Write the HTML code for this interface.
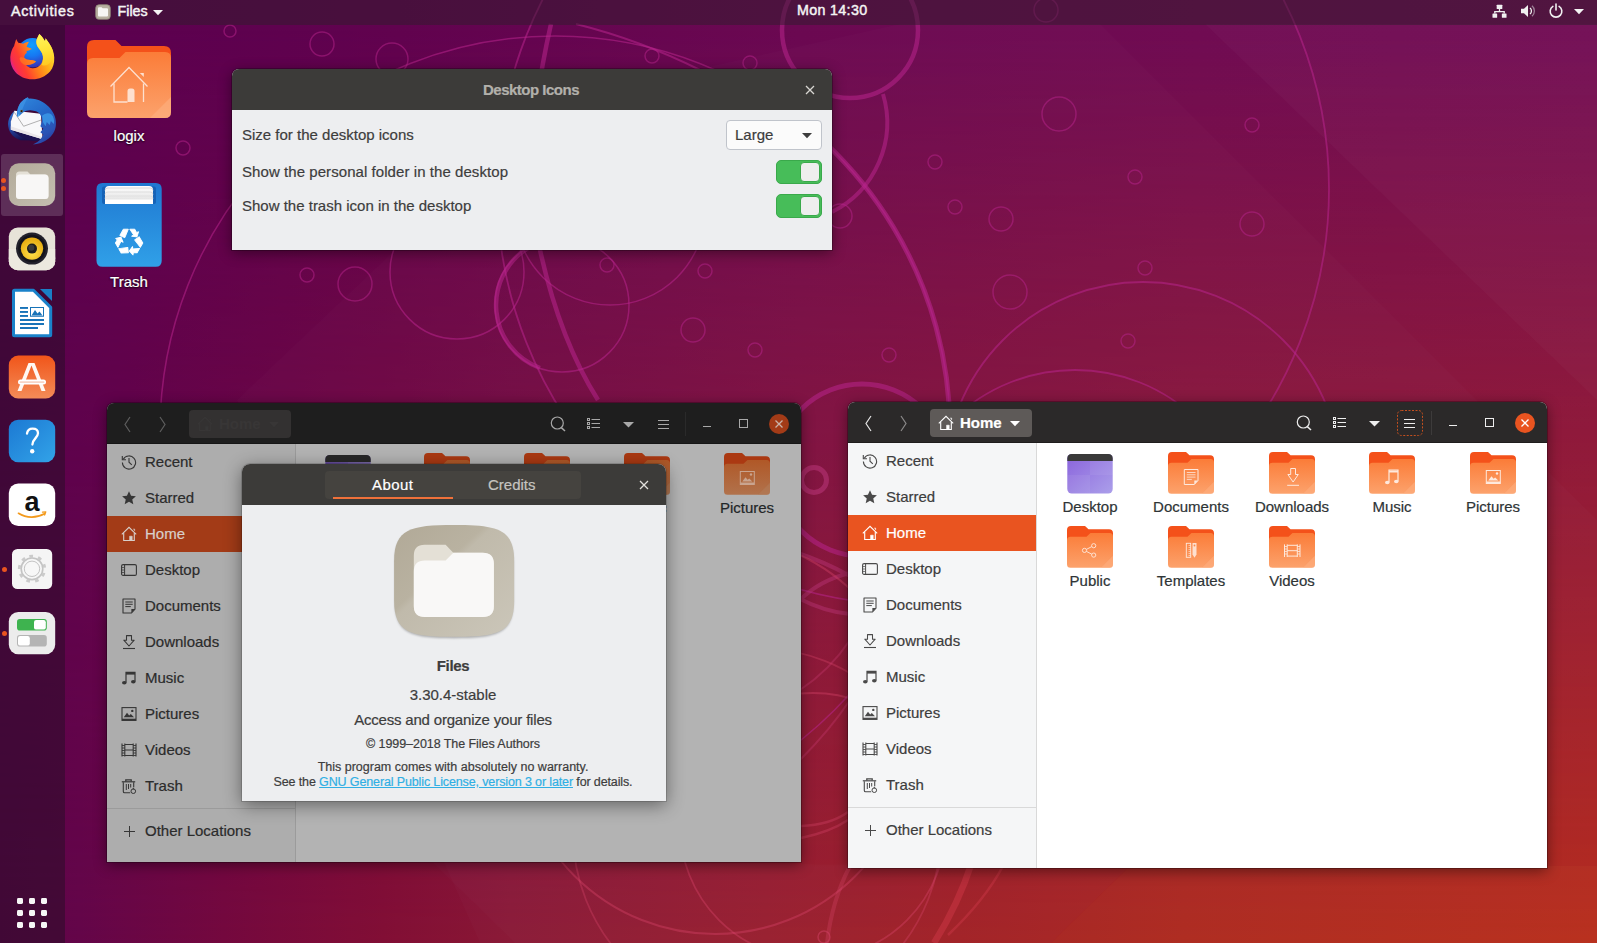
<!DOCTYPE html>
<html>
<head>
<meta charset="utf-8">
<title>Ubuntu Desktop</title>
<style>
*{box-sizing:border-box;margin:0;padding:0}
html,body{width:1597px;height:943px;overflow:hidden}
body{font-family:"Liberation Sans",sans-serif;font-size:15px;color:#3d3d3d;position:relative;background:#6a0a4a}
.abs{position:absolute}
#wall{position:absolute;left:0;top:0;width:1597px;height:943px}
/* top bar */
#topbar{position:absolute;left:0;top:0;width:1597px;height:25px;background:rgba(48,28,44,.5);color:#f4f4f4;font-weight:normal;font-size:14.300px;-webkit-text-stroke:.45px #f4f4f4}
#topbar span{position:absolute;top:-1px;line-height:23px;white-space:nowrap}
/* dock */
#dock{position:absolute;left:0;top:25px;width:65px;height:918px;background:rgba(36,14,36,.5)}
.dot{position:absolute;width:5px;height:5px;border-radius:50%;background:#e95420;left:1.5px}
/* windows */
.win{position:absolute;border-radius:7px 7px 0 0;box-shadow:0 3px 14px rgba(0,0,0,.45),0 0 0 1px rgba(0,0,0,.25)}
.hdr{position:absolute;left:0;top:0;width:100%;border-radius:7px 7px 0 0}
.t{position:absolute;white-space:nowrap;line-height:18px}
.side .t{left:0}
.row{position:absolute;left:0;width:188px;height:36px}
.row svg{position:absolute;left:12px;top:10px;width:17px;height:17px}
.row span{position:absolute;left:38px;top:0;line-height:35px;white-space:nowrap;font-size:15px}
.sl,.fl,.t{-webkit-text-stroke:.2px}
.ctr{left:0;width:422px;text-align:center}
.fl{position:absolute;width:100px;text-align:center;font-size:15px;line-height:18px;white-space:nowrap}
</style>
</head>
<body>
<svg id="wall" width="1597" height="943" viewBox="0 0 1597 943">
<defs>
<linearGradient id="wgt" x1="0" y1="0" x2="1" y2="0">
<stop offset="0" stop-color="#5a004f"/><stop offset=".25" stop-color="#61034f"/><stop offset=".5" stop-color="#6b0952"/><stop offset=".75" stop-color="#700c53"/><stop offset="1" stop-color="#720e55"/>
</linearGradient>
<linearGradient id="wgb" x1="0" y1="0" x2="1" y2="0">
<stop offset="0" stop-color="#5f0349"/><stop offset=".05" stop-color="#640549"/><stop offset=".14" stop-color="#74083e"/><stop offset=".24" stop-color="#820e35"/><stop offset=".32" stop-color="#8a1734"/><stop offset=".48" stop-color="#981c2c"/><stop offset=".6" stop-color="#a11e23"/><stop offset=".74" stop-color="#ab251e"/><stop offset="1" stop-color="#b5291b"/>
</linearGradient>
<linearGradient id="wgm" x1="0" y1="0" x2="0" y2="1"><stop offset="0" stop-color="#fff" stop-opacity="0"/><stop offset=".03" stop-color="#fff" stop-opacity="0"/><stop offset="1" stop-color="#fff" stop-opacity="1"/></linearGradient>
<mask id="wm"><rect width="1597" height="943" fill="url(#wgm)"/></mask>
</defs>
<rect width="1597" height="943" fill="url(#wgt)"/>
<rect width="1597" height="943" fill="url(#wgb)" mask="url(#wm)"/>
<!-- facets -->
<path d="M237 400L395 250L560 100L900 24H1100L1597 520V943H480z" fill="#fff" fill-opacity=".016"/>
<path d="M1205 24L1597 400V24z" fill="#fff" fill-opacity=".022"/>
<path d="M432 862L515 943H1051L1130 866z" fill="#fff" fill-opacity=".014"/>
<path d="M1130 866L1051 943H1597V866z" fill="#ff9a40" fill-opacity=".045"/>
<g fill="none" stroke="#b8248c" stroke-opacity=".55">
<!-- big circle thin left / thick right -->
<circle cx="555" cy="431" r="395" stroke-width="1.500"/>
<path d="M740 82A395 395 0 0 1 950 431" stroke-width="5" stroke-opacity=".6"/>
<!-- big thin circle -->
<circle cx="913" cy="189" r="416" stroke-width="1.800"/>
<!-- top circles -->
<circle cx="850" cy="30" r="68" stroke-width="4.500"/>
<path d="M883 94A100 100 0 0 1 832 212" stroke-width="4"/>
<circle cx="457" cy="272" r="67" stroke-width="1.500"/>
<circle cx="562" cy="305" r="67" stroke-width="1.500"/>
<path d="M528 248A67 67 0 0 0 540 368" stroke-width="4.500"/>
<circle cx="610" cy="210" r="95" stroke-width="1.500"/>
<path d="M551 24Q520 160 540 250T598 400" stroke-width="4.500"/>
<path d="M576 24Q640 40 700 70" stroke-width="2"/>
<!-- lower right -->
<circle cx="1143" cy="480" r="198" stroke-width="1.800"/>
<circle cx="1075" cy="545" r="175" stroke-width="1.800"/>
<circle cx="862" cy="470" r="86" stroke-width="5"/>
<circle cx="814" cy="480" r="12.500" stroke-width="5" stroke="#c03a80" stroke-opacity=".5"/>
<path d="M795 552Q825 562 850 576M850 573Q820 580 800 600M798 598Q825 612 850 614" stroke-width="4" stroke="#c03a80" stroke-opacity=".4"/>
<path d="M800 690Q830 670 850 640M800 760Q830 730 850 700" stroke-width="2" stroke="#d0407a" stroke-opacity=".3"/>
<!-- bottom -->
<circle cx="715" cy="735" r="199" stroke-width="2" stroke="#d8446a" stroke-opacity=".4"/>
<circle cx="757" cy="832" r="184" stroke-width="1.800" stroke="#d8446a" stroke-opacity=".35"/>
<circle cx="813" cy="826" r="133" stroke-width="1.800" stroke="#d8446a" stroke-opacity=".4"/>
<path d="M972 862Q958 905 934 943" stroke-width="6.500" stroke="#d23a4a" stroke-opacity=".45"/>
<path d="M1003 866Q985 900 948 935" stroke-width="2.500" stroke="#d23a4a" stroke-opacity=".4"/>
<path d="M801 826Q830 825 848 812M801 838Q830 832 848 820" stroke-width="2.500" stroke="#d8446a" stroke-opacity=".35"/>
<path d="M827 943Q832 900 850 866" stroke-width="4" stroke="#d8446a" stroke-opacity=".3"/>
<circle cx="824" cy="937" r="6" stroke-width="1.500" stroke="#d8446a" stroke-opacity=".45"/>
</g>
<g fill="none" stroke="#b8248c" stroke-opacity=".5" stroke-width="1.500">
<circle cx="230" cy="31" r="6"/><circle cx="183" cy="148" r="7"/><circle cx="322" cy="44" r="12"/><circle cx="392" cy="59" r="16"/>
<circle cx="652" cy="56" r="7"/><circle cx="750" cy="63" r="7"/><circle cx="1059" cy="114" r="17"/><circle cx="935" cy="162" r="7"/>
<circle cx="955" cy="207" r="7"/><circle cx="1001" cy="219" r="12"/><circle cx="1010" cy="292" r="17"/><circle cx="693" cy="330" r="12"/>
<circle cx="755" cy="350" r="7"/><circle cx="889" cy="355" r="7"/><circle cx="607" cy="265" r="7"/><circle cx="705" cy="271" r="7"/>
<circle cx="840" cy="216" r="12"/><circle cx="307" cy="275" r="7"/><circle cx="355" cy="284" r="17"/><circle cx="1145" cy="268" r="7"/>
<circle cx="1128" cy="341" r="7"/><circle cx="1252" cy="125" r="7"/><circle cx="1252" cy="224" r="12"/><circle cx="1135" cy="177" r="7"/>
<circle cx="1046" cy="10" r="12"/><circle cx="437" cy="175" r="7"/>
</g>
</svg>

<div id="topbar">
<span id="tb-act" style="left:11px;top:0;letter-spacing:.71px">Activities</span>
<svg class="abs" style="left:95px;top:3.500px" width="16" height="16" viewBox="0 0 16 16"><rect x=".7" y=".7" width="14.6" height="14.6" rx="3.4" fill="#b8b0a0" stroke="#8f8778" stroke-width=".8"/><path d="M3 4.2q0-1 1-1h2.6l1 1H12q1 0 1 1V11.6q0 1-1 1H4q-1 0-1-1z" fill="#f7f6f4"/></svg>
<span id="tb-files" style="left:117.500px;top:0;letter-spacing:0">Files</span>
<svg class="abs" style="left:153px;top:9.500px" width="10" height="6" viewBox="0 0 10 6"><path d="M0 0h10L5 5.2z" fill="#f4f4f4"/></svg>
<span id="tb-clock" style="left:797px;letter-spacing:.32px">Mon 14:30</span>
<!-- network -->
<svg class="abs" style="left:1492px;top:3.500px" width="15" height="14.500" viewBox="0 0 16 17" preserveAspectRatio="none"><g fill="#f0f0f0"><rect x="5" y="1" width="6" height="5" rx=".6"/><rect x="0.5" y="11" width="5" height="5" rx=".6"/><rect x="10.5" y="11" width="5" height="5" rx=".6"/><path d="M7.3 6h1.4v2.3h5v2.7h-1.4V9.700h-8.600V11H2.300V8.300h5z"/></g></svg>
<!-- volume -->
<svg class="abs" style="left:1520px;top:3px" width="17" height="16" viewBox="0 0 17 17" preserveAspectRatio="none"><path d="M1 6h3l4-4v13l-4-4H1z" fill="#f0f0f0"/><path d="M10 5.200a4.500 4.500 0 0 1 0 6.600" stroke="#f0f0f0" stroke-width="1.300" fill="none"/><path d="M12 3a7.500 7.500 0 0 1 0 11" stroke="#cfc6cf" stroke-opacity=".6" stroke-width="1.300" fill="none"/></svg>
<!-- power -->
<svg class="abs" style="left:1547.500px;top:2.500px" width="16" height="16" viewBox="0 0 17 17"><path d="M5.200 3.600a6.200 6.200 0 1 0 6.600 0" stroke="#f0f0f0" stroke-width="1.700" fill="none" stroke-linecap="round"/><path d="M8.500 1v6.500" stroke="#f0f0f0" stroke-width="1.700" stroke-linecap="round"/></svg>
<svg class="abs" style="left:1574px;top:9px" width="10" height="6" viewBox="0 0 10 6"><path d="M0 0h10L5 5.2z" fill="#f4f4f4"/></svg>
</div>

<div id="dock">
<div class="abs" style="left:1px;top:129px;width:62px;height:62px;border-radius:3px;background:rgba(255,255,255,.16)"></div>
</div>
<div class="dot" style="top:178px;left:1.200px"></div><div class="dot" style="top:186px;left:1.200px"></div>
<div class="dot" style="top:566.500px"></div><div class="dot" style="top:630.500px"></div>
<svg class="abs" style="left:0;top:24px" width="65" height="919" viewBox="0 24 65 919">
<defs>
<linearGradient id="ffx" x1=".8" y1=".1" x2=".25" y2=".95"><stop offset="0" stop-color="#ffe226"/><stop offset=".35" stop-color="#ffa31a"/><stop offset=".7" stop-color="#ff4a2a"/><stop offset="1" stop-color="#e2219a"/></linearGradient>
<radialGradient id="ffg" cx=".5" cy=".35" r=".6"><stop offset="0" stop-color="#1e8af5"/><stop offset=".7" stop-color="#1b4fd6"/><stop offset="1" stop-color="#3b1fa8"/></radialGradient>
<linearGradient id="tbg" x1="0" y1="0" x2="1" y2="1"><stop offset="0" stop-color="#2a8fe0"/><stop offset=".6" stop-color="#1c63c4"/><stop offset="1" stop-color="#12408f"/></linearGradient>
<linearGradient id="fsq" x1="0" y1="0" x2="1" y2="1"><stop offset="0" stop-color="#b3ab9a"/><stop offset="1" stop-color="#c4beb0"/></linearGradient>
<linearGradient id="swg" x1="0" y1="0" x2="0" y2="1"><stop offset="0" stop-color="#f1551a"/><stop offset="1" stop-color="#f38c58"/></linearGradient>
<linearGradient id="hpg" x1="0" y1="0" x2="1" y2="1"><stop offset="0" stop-color="#1c79d3"/><stop offset="1" stop-color="#32a3e8"/></linearGradient>
<radialGradient id="rby" cx=".5" cy=".7" r=".6"><stop offset="0" stop-color="#ffe04a"/><stop offset="1" stop-color="#e8b014"/></radialGradient>
</defs>
<!-- firefox -->
<g transform="translate(4 29) scale(.05938)">
<defs>
<radialGradient id="ffg2" gradientUnits="userSpaceOnUse" cx="470" cy="270" r="420"><stop offset="0" stop-color="#12a0ff"/><stop offset=".45" stop-color="#1677f2"/><stop offset=".8" stop-color="#3340c0"/><stop offset="1" stop-color="#3a2398"/></radialGradient>
<linearGradient id="ffx2" gradientUnits="userSpaceOnUse" x1="110" y1="640" x2="840" y2="300"><stop offset="0" stop-color="#d41fae"/><stop offset=".1" stop-color="#f72c50"/><stop offset=".25" stop-color="#ff3d30"/><stop offset=".48" stop-color="#ff7a1c"/><stop offset=".7" stop-color="#ffae18"/><stop offset=".9" stop-color="#ffd62c"/><stop offset="1" stop-color="#ffe83a"/></linearGradient>
<linearGradient id="ffy2" gradientUnits="userSpaceOnUse" x1="600" y1="90" x2="740" y2="640"><stop offset="0" stop-color="#fff45a"/><stop offset=".5" stop-color="#ffe53a"/><stop offset="1" stop-color="#ffc51e"/></linearGradient>
</defs>
<circle cx="480" cy="400" r="250" fill="url(#ffg2)"/>
<path d="M205 170C190 215 180 250 170 285C135 330 112 400 106 470C100 560 130 650 190 725C260 805 370 850 480 848C590 846 700 800 775 715C830 650 850 570 846 480C842 400 815 320 765 250C745 222 722 185 700 155C700 175 698 190 690 205C665 160 630 115 595 85C575 120 560 150 548 185C540 225 548 260 565 295C590 335 625 370 645 415C665 470 660 530 625 590C590 640 535 662 480 660C440 657 400 640 372 605C430 612 500 590 540 548C505 530 470 522 440 522C400 520 365 512 345 490C335 470 345 430 385 402C383 390 381 380 380 370C410 360 445 350 470 335C440 325 405 312 380 300C390 270 405 240 420 215C385 220 350 232 325 248C295 238 270 236 250 238C230 220 215 195 205 170z" fill="url(#ffx2)"/>
<path d="M595 85C575 120 560 150 548 185C540 225 548 260 565 295C590 335 625 370 645 415C665 470 662 540 630 600C690 640 760 600 800 540C850 470 835 360 765 250C745 222 722 185 700 155C700 175 698 190 690 205C665 160 630 115 595 85z" fill="url(#ffy2)"/>
<path d="M345 490C300 470 270 470 262 500C275 560 320 600 372 605C430 612 500 590 540 548C505 530 470 522 440 522C400 520 365 512 345 490z" fill="#ff8a1c" fill-opacity=".55"/>
</g>
<!-- thunderbird -->
<g transform="translate(4 93) scale(.05938)">
<defs>
<linearGradient id="tb1" gradientUnits="userSpaceOnUse" x1="250" y1="100" x2="800" y2="850"><stop offset="0" stop-color="#2f86dc"/><stop offset=".45" stop-color="#2467c8"/><stop offset=".8" stop-color="#2b52b4"/><stop offset="1" stop-color="#23399a"/></linearGradient>
<linearGradient id="tb2" gradientUnits="userSpaceOnUse" x1="100" y1="300" x2="250" y2="800"><stop offset="0" stop-color="#2f7ad6"/><stop offset=".6" stop-color="#23409c"/><stop offset="1" stop-color="#171250"/></linearGradient>
</defs>
<path d="M240 250C120 330 55 450 72 565C90 690 180 765 275 795L560 800L650 780L115 480L175 300z" fill="url(#tb2)"/>
<path d="M115 610L650 775L560 805C440 800 320 770 250 710z" fill="#1b1352"/>
<path d="M175 300L620 350L650 780L115 620V480z" fill="#f8f8fa"/>
<path d="M175 325L330 560L625 455" fill="none" stroke="#6f6f6f" stroke-width="9"/>
<path d="M115 560L115 620L650 780L648 740z" fill="#e9e6ea"/>
<path d="M225 405C205 340 225 240 275 170C310 120 360 85 402 70C408 82 415 90 425 95C480 92 570 110 650 150C740 200 820 290 855 390C885 480 880 580 845 650C800 740 720 810 620 842C570 858 530 864 488 866C540 840 580 815 605 790C630 760 650 730 662 700L612 662L662 602L612 562L642 470C640 420 625 380 600 350C570 315 520 298 445 292C400 290 360 305 335 322C310 340 285 360 270 375z" fill="url(#tb1)"/>
<path d="M640 385C690 340 750 330 800 360C840 400 850 470 840 520L790 470L770 540L720 490L700 560L660 500z" fill="#3c9be8" fill-opacity=".8"/>
<path d="M275 170C310 120 360 85 402 70C380 110 350 170 320 250C300 300 270 350 235 395C215 340 230 240 275 170z" fill="#3f94e6" fill-opacity=".75"/>
<circle cx="296" cy="305" r="24" fill="#8a7a55"/><circle cx="296" cy="305" r="16" fill="#1a1208"/>
<path d="M225 405L240 355L275 375z" fill="#5fb4ee"/>
</g>
<!-- files -->
<g>
<rect x="8.800" y="163.300" width="46.400" height="42.700" rx="10" fill="url(#fsq)"/>
<path d="M16 175q0-3.500 3.500-3.500h8l3 3H45q3.500 0 3.500 3.500V196q0 3-3 3H19q-3 0-3-3z" fill="#e4e0d6"/>
<path d="M16 179q0-4.500 4-4.500H44.500q4 0 4 4V195.500q0 3.500-3.500 3.500H19.500q-3.500 0-3.500-3.500z" fill="#f8f7f6"/>
</g>
<!-- rhythmbox -->
<g>
<rect x="8.800" y="227.600" width="46.400" height="42.600" rx="9" fill="#e7e3d8"/>
<rect x="8.800" y="249" width="46.400" height="21.200" rx="9" fill="#ece9df"/>
<rect x="8.800" y="249" width="46.400" height="10" fill="#ece9df"/>
<circle cx="32" cy="248.600" r="16" fill="#23222c"/>
<circle cx="32" cy="248.600" r="13.800" fill="#14141c"/>
<circle cx="32" cy="248.600" r="11.200" fill="url(#rby)"/>
<circle cx="32" cy="248.600" r="5" fill="#1e1e1e"/>
<circle cx="31.300" cy="247.800" r="3" fill="#3a3a3a"/>
</g>
<!-- writer -->
<g>
<path d="M14.500 290.200h19l17.200 17.200v27.300q0 1-1 1H14.500q-1 0-1-1v-43.500q0-1 1-1z" fill="#fff" stroke="#1a82ca" stroke-width="3" stroke-linejoin="round"/>
<path d="M40 289h12v12z" fill="#1a7fc6"/>
<g fill="#1873b8"><rect x="20" y="307" width="8" height="1.900"/><rect x="20" y="311" width="8" height="1.900"/><rect x="20" y="315" width="8" height="1.900"/><rect x="20" y="319" width="24" height="2"/><rect x="20" y="323" width="24" height="2"/><rect x="20" y="327" width="18" height="2"/>
<path d="M30 307h14v9.800H30z M31 308v7.800h12V308z"/><path d="M31.500 315.500l3.500-5.500l2.500 3.500l2-2l3 4z"/></g>
</g>
<!-- software -->
<g>
<rect x="8.800" y="355.600" width="46.400" height="43" rx="9.500" fill="url(#swg)"/>
<path d="M28.500 363h6l11 28h-4l-10-25.500l-10 25.500h-4z" fill="#fff7f2"/>
<rect x="18" y="379.600" width="28" height="5" rx="2.500" fill="#fff" />
<rect x="19.500" y="381.200" width="25" height="1.800" rx=".9" fill="#f7d3c4"/>
</g>
<!-- help -->
<g>
<rect x="8.800" y="419.800" width="46.400" height="42.400" rx="9.500" fill="url(#hpg)"/>
<path d="M27 433.500c.5-3.200 2.600-4.800 5.600-4.800c3.400 0 5.400 2 5.400 4.600c0 2.400-1.300 3.800-3 5.600c-1.600 1.700-2.600 3-2.600 5.600" fill="none" stroke="#fff" stroke-width="2.300" stroke-linecap="round"/>
<circle cx="32.200" cy="451.300" r="2.200" fill="#fff"/>
</g>
<!-- amazon -->
<g>
<rect x="8.800" y="483.500" width="46.400" height="42.600" rx="9.500" fill="#fff"/>
<text x="32" y="510.500" font-family="Liberation Sans, sans-serif" font-weight="bold" font-size="27" text-anchor="middle" fill="#111">a</text>
<path d="M18.500 513.300c8 5 18 5 26 .5" fill="none" stroke="#f39a1c" stroke-width="1.700" stroke-linecap="round"/>
<path d="M42.500 512.100l3.300-.3l-1.200 3.200" fill="none" stroke="#f39a1c" stroke-width="1.300" stroke-linecap="round" stroke-linejoin="round"/>
</g>
<!-- settings -->
<g>
<rect x="12" y="549" width="40.200" height="40" rx="5.500" fill="#f5f5f5"/>
<circle cx="32" cy="568.800" r="12.700" fill="none" stroke="#cbcbcb" stroke-width="2.800" stroke-dasharray="3.700 5.166" transform="rotate(-102 32 568.800)"/>
<circle cx="32" cy="568.800" r="10.800" fill="#f7f7f7" stroke="#c4c4c4" stroke-width="1.600"/>
<circle cx="32" cy="568.800" r="7.700" fill="none" stroke="#bcbcbc" stroke-width=".9"/>
</g>
<!-- tweaks / extensions -->
<g>
<rect x="8.800" y="612" width="46.400" height="42.200" rx="9.500" fill="#ececec"/>
<rect x="17" y="619" width="29.800" height="11.600" rx="2.800" fill="#3eb34f"/>
<rect x="34" y="620" width="11.800" height="9.600" rx="2.200" fill="#fff"/>
<rect x="17" y="635" width="29.800" height="11.600" rx="2.800" fill="#b4b4b4"/>
<rect x="18" y="636" width="11.800" height="9.600" rx="2.200" fill="#fff"/>
</g>
<!-- show apps -->
<g fill="#f6f6f6">
<rect x="17" y="898" width="6" height="6" rx="1.400"/><rect x="29" y="898" width="6" height="6" rx="1.400"/><rect x="41" y="898" width="6" height="6" rx="1.400"/>
<rect x="17" y="910" width="6" height="6" rx="1.400"/><rect x="29" y="910" width="6" height="6" rx="1.400"/><rect x="41" y="910" width="6" height="6" rx="1.400"/>
<rect x="17" y="922" width="6" height="6" rx="1.400"/><rect x="29" y="922" width="6" height="6" rx="1.400"/><rect x="41" y="922" width="6" height="6" rx="1.400"/>
</g>
</svg>

<svg class="abs" style="left:80px;top:36px" width="100" height="240" viewBox="80 36 100 240">
<defs>
<linearGradient id="fo1" x1="0" y1="0" x2="0" y2="1"><stop offset="0" stop-color="#fb7c38"/><stop offset="1" stop-color="#fca26c"/></linearGradient>
<linearGradient id="tr1" x1="0" y1="0" x2="0" y2="1"><stop offset="0" stop-color="#1f78d1"/><stop offset="1" stop-color="#30a0e8"/></linearGradient>
<linearGradient id="pap" x1="0" y1="0" x2="0" y2="1"><stop offset="0" stop-color="#ffffff"/><stop offset="1" stop-color="#dcdcdc"/></linearGradient>
</defs>
<!-- home folder -->
<path d="M87 47q0-7 7-7h21.500l6 6H164q7 0 7 7v20H87z" fill="#f4511a"/>
<path d="M87 64q0-6 6-6h26.500l6-6H165q6 0 6 6v54q0 6-6 6H93q-6 0-6-6z" fill="url(#fo1)"/>
<path d="M150 118l21-21v15q0 6-6 6z" fill="#fdb283" fill-opacity=".55"/>
<g fill="none" stroke="#fde0cf" stroke-width="1.300" stroke-linejoin="miter"><path d="M110.500 86.500l18.500-19l18.500 19"/><path d="M114 83.500v18.500h13.500"/><path d="M143.500 83.500v18.500"/></g><path d="M139.800 73h4v4z" fill="#fde0cf"/>
<path d="M127.500 102v-11q0-2.500 2.500-2.500h2q2.500 0 2.500 2.500v11z" fill="#fde0cf"/>
<!-- trash -->
<path d="M96.500 189q0-6 6-6h53.200q6 0 6 6v71.700q0 6-6 6h-53.200q-6 0-6-6z" fill="url(#tr1)"/>
<rect x="102" y="186.500" width="54" height="17.500" rx="2" fill="#1663b6"/>
<path d="M105 190q0-4 4-4h40q4 0 4 4v14h-48z" fill="url(#pap)"/>
<path d="M105 190.500q0-2.500 3-2.500h42q3 0 3 2.500" fill="none" stroke="#d2d2d2" stroke-width=".8"/>
<path d="M105 194.500q0-2.500 3-2.500h42q3 0 3 2.500" fill="none" stroke="#d8d8d8" stroke-width=".8"/>
<path d="M105 198.500q0-2.500 3-2.500h42q3 0 3 2.500" fill="none" stroke="#dedede" stroke-width=".8"/>
<rect x="105" y="199.500" width="48" height="4.500" fill="#fff"/>
<g fill="#fff" transform="translate(129.100 241.700)">
<g id="rc" stroke="#fff" stroke-width=".9" stroke-linejoin="round"><path d="M-9.300-6.200L-5.800-12.500H-.8L-4.300-4z"/><path d="M.7-12.500H5.700L7.500-9.200L9.500-10L7.900-4.800L2.500-5.500L4.500-6.800z"/></g>
<use href="#rc" transform="rotate(120)"/><use href="#rc" transform="rotate(240)"/>
</g>
</svg>
<div class="fl" id="dl1" style="left:79px;top:127px;color:#fff;text-shadow:0 1px 2px rgba(0,0,0,.8),0 0 2px rgba(0,0,0,.5)">logix</div>
<div class="fl" id="dl2" style="left:79px;top:273px;color:#fff;text-shadow:0 1px 2px rgba(0,0,0,.8),0 0 2px rgba(0,0,0,.5)">Trash</div>

<div class="win" id="w1" style="left:232px;top:69px;width:600px;height:181px;background:#edeef0">
<div class="hdr" style="height:41px;background:#3c3b39"></div>
<div class="t" id="w1-title" style="left:251px;top:12px;font-weight:bold;color:#b2b0ab;font-size:15px;letter-spacing:-.5px">Desktop Icons</div>
<svg class="abs" style="left:573px;top:16px" width="10" height="10" viewBox="0 0 10 10"><path d="M1 1l8 8M9 1l-8 8" stroke="#d8d6d2" stroke-width="1.300"/></svg>
<div class="t" id="w1-r1" style="left:10px;top:57px">Size for the desktop icons</div>
<div class="t" id="w1-r2" style="left:10px;top:94px;letter-spacing:.065px">Show the personal folder in the desktop</div>
<div class="t" id="w1-r3" style="left:10px;top:128px">Show the trash icon in the desktop</div>
<div class="abs" style="left:494px;top:51px;width:96px;height:30px;background:#fbfbfb;border:1px solid #c0c4cb;border-radius:4px"></div>
<div class="t" id="w1-large" style="left:503px;top:57px">Large</div>
<svg class="abs" style="left:569.500px;top:63.5px" width="10" height="6" viewBox="0 0 10 6"><path d="M0 0h10L5 5.300z" fill="#3d3d3d"/></svg>
<div class="abs" style="left:544px;top:91px;width:46px;height:24px;background:#47bd59;border-radius:5px;border:1px solid #3aa94b"></div>
<div class="abs" style="left:568px;top:93px;width:20px;height:20px;background:#eeeeee;border-radius:4px;border:1px solid #3aa94b"></div>
<div class="abs" style="left:544px;top:125px;width:46px;height:24px;background:#47bd59;border-radius:5px;border:1px solid #3aa94b"></div>
<div class="abs" style="left:568px;top:127px;width:20px;height:20px;background:#eeeeee;border-radius:4px;border:1px solid #3aa94b"></div>
</div>

<svg width="0" height="0" style="position:absolute"><defs>
<linearGradient id="fg1" x1="0" y1="0" x2="0" y2="1"><stop offset="0" stop-color="#fb7c38"/><stop offset="1" stop-color="#fca26c"/></linearGradient>
<linearGradient id="fg2" x1="0" y1="0" x2="0" y2="1"><stop offset="0" stop-color="#b05827"/><stop offset="1" stop-color="#b1724c"/></linearGradient>
<linearGradient id="dg1" x1="0" y1="0" x2="1" y2="1"><stop offset="0" stop-color="#8a63dc"/><stop offset="1" stop-color="#ab9fea"/></linearGradient>
<linearGradient id="dg2" x1="0" y1="0" x2="1" y2="1"><stop offset="0" stop-color="#61469a"/><stop offset="1" stop-color="#786fa4"/></linearGradient>
</defs></svg>
<svg width="0" height="0" style="position:absolute">
<defs>
<symbol id="i-recent" viewBox="0 0 16 16"><path d="M2.300 5.200A6.600 6.600 0 1 1 1.400 8.500" fill="none" stroke="currentColor" stroke-width="1.100"/><path d="M1.300 2v3.700h3.700" fill="none" stroke="currentColor" stroke-width="1.100"/><path d="M8 4v4.200l2.800 2.600" fill="none" stroke="currentColor" stroke-width="1.100"/></symbol>
<symbol id="i-star" viewBox="0 0 16 16"><path d="M8 1.300l2.050 4.500l4.850.5l-3.650 3.250l1.050 4.800L8 11.850l-4.300 2.500l1.050-4.800L1.100 6.300l4.850-.5z" fill="currentColor"/></symbol>
<symbol id="i-home" viewBox="0 0 16 16"><path d="M.8 8.300L8 1.300l7.200 7" fill="none" stroke="currentColor" stroke-width="1.100"/><path d="M2.700 7v7.500h10.600V7" fill="none" stroke="currentColor" stroke-width="1.100"/><path d="M8.600 14.500v-4.300h2.600v4.300" fill="currentColor" stroke="currentColor" stroke-width=".6"/><path d="M12.300 3.200h1.300v1.600" fill="none" stroke="currentColor" stroke-width=".9"/></symbol>
<symbol id="i-desktop" viewBox="0 0 16 16"><rect x=".6" y="2.600" width="14.800" height="10.800" rx="1.500" fill="none" stroke="currentColor" stroke-width="1.100"/><path d="M3.600 2.600v10.800" stroke="currentColor" stroke-width="1"/><path d="M1.300 5.500h1.400M1.300 8h1.400M1.300 10.500h1.400" stroke="currentColor" stroke-width="1"/></symbol>
<symbol id="i-docs" viewBox="0 0 16 16"><path d="M2 1h12v10.200L10.500 15H2z" fill="none" stroke="currentColor" stroke-width="1.100" stroke-linejoin="round"/><path d="M14 11h-3.600v4z" fill="currentColor"/><path d="M4.300 4h7.400M4.300 6.300h7.400M4.300 8.600h5.500" stroke="currentColor" stroke-width="1"/></symbol>
<symbol id="i-down" viewBox="0 0 16 16"><path d="M5.500 1.600h5v4.600h2.700L8 12L2.800 6.200h2.700z" fill="none" stroke="currentColor" stroke-width="1.050" stroke-linejoin="round"/><path d="M2 14.500h12" stroke="currentColor" stroke-width="1.100"/></symbol>
<symbol id="i-music" viewBox="0 0 16 16"><path d="M5 12.500V2.300h9V11.500" fill="none" stroke="currentColor" stroke-width="1.200"/><path d="M5 3.700h9" stroke="currentColor" stroke-width="1.800"/><ellipse cx="3.300" cy="12.700" rx="2.300" ry="1.800" fill="currentColor"/><ellipse cx="12.300" cy="11.700" rx="2.300" ry="1.800" fill="currentColor"/></symbol>
<symbol id="i-pics" viewBox="0 0 16 16"><rect x="1" y="1.600" width="14" height="12.800" fill="none" stroke="currentColor" stroke-width="1.100"/><path d="M1 12.700h14v1.700H1z" fill="currentColor"/><path d="M2.800 11.200l3.200-4.400l2.200 2.600l1.600-1.300l3.200 3.100z" fill="currentColor"/><circle cx="11.300" cy="4.900" r="1.200" fill="currentColor"/></symbol>
<symbol id="i-video" viewBox="0 0 16 16"><path d="M1 1.500v13M15 1.500v13M3.800 1.500v13M12.200 1.500v13M3.800 2.500h8.400M3.800 8h8.400M3.800 13.500h8.400" fill="none" stroke="currentColor" stroke-width="1.100"/><path d="M1 3.500h2.800M1 6h2.800M1 8.500h2.800M1 11h2.800M1 13.500h2.800M12.200 3.500H15M12.200 6H15M12.200 8.500H15M12.200 11H15M12.200 13.500H15" stroke="currentColor" stroke-width=".9"/></symbol>
<symbol id="i-trash" viewBox="0 0 16 16"><path d="M2.300 4.300V13.500q0 1.300 1.300 1.300h5.600M12.700 4.300v5" fill="none" stroke="currentColor" stroke-width="1.100"/><path d="M.8 3.800h13.400" stroke="currentColor" stroke-width="1.200"/><path d="M4.800 3.500V1.800h5.400v1.700" fill="none" stroke="currentColor" stroke-width="1.300"/><path d="M5.300 6v6M7.500 6v5M9.700 6v3.500" stroke="currentColor" stroke-width="1"/><circle cx="12.300" cy="13.200" r="2.300" fill="none" stroke="currentColor" stroke-width="1"/><path d="M12.300 9.800v1.800" stroke="currentColor" stroke-width="1"/></symbol>
<symbol id="i-plus" viewBox="0 0 16 16"><path d="M8.500 3v11M3 8.500h11" stroke="currentColor" stroke-width="1"/></symbol>
<symbol id="foldA" viewBox="0 0 46 42"><path d="M0 4Q0 0 4 0h14l3.500 3.300H42q4 0 4 4V22H0z" fill="#f4511a"/><path d="M0 14.300q0-3.500 3.500-3.500h16l4-3.700h19q3.500 0 3.500 3.500V38.300q0 3.500-3.500 3.500h-39q-3.500 0-3.500-3.500z" fill="url(#fg1)"/><path d="M34 41.800L46 29.800V38.300q0 3.500-3.500 3.500z" fill="#fdb283" fill-opacity=".5"/></symbol><symbol id="foldB" viewBox="0 0 46 42"><path d="M0 4Q0 0 4 0h14l3.500 3.300H42q4 0 4 4V22H0z" fill="#ab3912"/><path d="M0 14.300q0-3.500 3.500-3.500h16l4-3.700h19q3.500 0 3.500 3.500V38.300q0 3.500-3.500 3.500h-39q-3.500 0-3.500-3.500z" fill="url(#fg2)"/><path d="M34 41.800L46 29.800V38.300q0 3.500-3.500 3.500z" fill="#b27d5b" fill-opacity=".5"/></symbol>
</defs>
</svg>
<div class="win" id="w2" style="left:107px;top:403px;width:694px;height:459px;background:#b3b3b3">
<div class="hdr" style="height:41px;background:#1e1e1e;border-bottom:1px solid #161616"></div>
<svg class="abs" style="left:17px;top:12.5px" width="7" height="17" viewBox="0 0 7 17"><path d="M6 1L1 8.500L6 16" fill="none" stroke="#5e5e5e" stroke-width="1.200"/></svg>
<svg class="abs" style="left:52px;top:12.5px" width="7" height="17" viewBox="0 0 7 17"><path d="M1 1L6 8.500L1 16" fill="none" stroke="#5e5e5e" stroke-width="1.200"/></svg>
<div class="abs" style="left:82px;top:7px;width:102px;height:28px;border-radius:4px;background:#333131"></div>
<svg class="abs" style="left:90px;top:13px;color:#383636" width="16" height="16"><use href="#i-home"/></svg>
<div class="t" id="w2-path" style="left:112px;top:12px;font-weight:bold;color:#383636;font-size:15px">Home</div>
<svg class="abs" style="left:162px;top:19px" width="10" height="6" viewBox="0 0 10 6"><path d="M0 0h10L5 5.300z" fill="#383636"/></svg>
<svg class="abs" style="left:442px;top:12px" width="18" height="18" viewBox="0 0 18 18"><circle cx="8.300" cy="8" r="6" fill="none" stroke="#a8a8a8" stroke-width="1.200"/><path d="M12.300 12.600L16 16" stroke="#a8a8a8" stroke-width="1.500"/></svg>
<svg class="abs" style="left:480px;top:15px" width="13" height="11" viewBox="0 0 13 11"><g fill="none" stroke="#a8a8a8"><rect x=".5" y=".5" width="2" height="2" stroke-width="1"/><rect x=".5" y="4.500" width="2" height="2" stroke-width="1"/><rect x=".5" y="8.500" width="2" height="2" stroke-width="1"/><path d="M4.500 1.500H13M4.500 5.500H13M4.500 9.500H13" stroke-width="1.200"/></g></svg>
<svg class="abs" style="left:516px;top:19px" width="11" height="6" viewBox="0 0 11 6"><path d="M0 0h11L5.500 5.500z" fill="#a8a8a8"/></svg>
<svg class="abs" style="left:551px;top:16px" width="11" height="11" viewBox="0 0 11 11"><path d="M0 1.500H11M0 5.500H11M0 9.500H11" stroke="#a8a8a8" stroke-width="1.200"/></svg>
<div class="abs" style="left:578px;top:9px;width:1px;height:24px;background:#2a2a2a"></div>
<div class="abs" style="left:596px;top:23px;width:8px;height:1.300px;background:#a8a8a8"></div>
<div class="abs" style="left:632px;top:16px;width:9px;height:9px;border:1.300px solid #a8a8a8"></div>
<div class="abs" style="left:662px;top:11px;width:20px;height:20px;border-radius:50%;background:#a33b17"></div>
<svg class="abs" style="left:668px;top:17px" width="8" height="8" viewBox="0 0 8 8"><path d="M.5.5l7 7M7.500.5l-7 7" stroke="#c9b3aa" stroke-width="1.300"/></svg>
<div class="abs side" style="left:0;top:41px;width:189px;height:418px;background:#adadad;border-right:1px solid #9b9b9b"></div>
<div class="row" style="top:41px;"><svg style="color:#363636;left:14px;top:10px;width:16px;height:16px"><use href="#i-recent"/></svg><span class="sl" style="color:#2b2b2b">Recent</span></div>
<div class="row" style="top:77px;"><svg style="color:#363636;left:14px;top:10px;width:16px;height:16px"><use href="#i-star"/></svg><span class="sl" style="color:#2b2b2b">Starred</span></div>
<div class="row" style="top:113px;background:#a33b17;"><svg style="color:#d8cfca;left:14px;top:10px;width:16px;height:16px"><use href="#i-home"/></svg><span class="sl" style="color:#d8cfca">Home</span></div>
<div class="row" style="top:149px;"><svg style="color:#363636;left:14px;top:10px;width:16px;height:16px"><use href="#i-desktop"/></svg><span class="sl" style="color:#2b2b2b">Desktop</span></div>
<div class="row" style="top:185px;"><svg style="color:#363636;left:14px;top:10px;width:16px;height:16px"><use href="#i-docs"/></svg><span class="sl" style="color:#2b2b2b">Documents</span></div>
<div class="row" style="top:221px;"><svg style="color:#363636;left:14px;top:10px;width:16px;height:16px"><use href="#i-down"/></svg><span class="sl" style="color:#2b2b2b">Downloads</span></div>
<div class="row" style="top:257px;"><svg style="color:#363636;left:14px;top:10px;width:16px;height:16px"><use href="#i-music"/></svg><span class="sl" style="color:#2b2b2b">Music</span></div>
<div class="row" style="top:293px;"><svg style="color:#363636;left:14px;top:10px;width:16px;height:16px"><use href="#i-pics"/></svg><span class="sl" style="color:#2b2b2b">Pictures</span></div>
<div class="row" style="top:329px;"><svg style="color:#363636;left:14px;top:10px;width:16px;height:16px"><use href="#i-video"/></svg><span class="sl" style="color:#2b2b2b">Videos</span></div>
<div class="row" style="top:365px;"><svg style="color:#363636;left:14px;top:10px;width:16px;height:16px"><use href="#i-trash"/></svg><span class="sl" style="color:#2b2b2b">Trash</span></div>
<div class="abs" style="left:0;top:405px;width:188px;height:1px;background:#9b9b9b"></div>
<div class="row" style="top:410px"><svg style="color:#363636;left:14px;top:10px;width:16px;height:16px"><use href="#i-plus"/></svg><span class="sl" style="color:#2b2b2b">Other Locations</span></div>
<svg class="abs" style="left:218px;top:52px" width="46" height="40" viewBox="0 0 46 40"><rect x=".3" y="0" width="45.400" height="39.600" rx="4.500" fill="url(#dg2)"/><path d="M.3 7V4.500Q.3 0 4.800 0H41.200q4.500 0 4.500 4.500V7z" fill="#282828"/><path d="M23 7h22.700v14H23z" fill="#fff" fill-opacity=".06"/><path d="M.3 21H23v18.600H4.800q-4.500 0-4.500-4.500z" fill="#fff" fill-opacity=".06"/></svg>
<div class="fl" style="left:191px;top:96px;color:#222628">Desktop</div>
<svg class="abs" style="left:317px;top:50px" width="46" height="42" viewBox="0 0 46 42"><use href="#foldB"/><path d="M16.300 17.500h13.700v11l-3.700 4h-10z" fill="none" stroke="#c9a48f" stroke-width="1"/><path d="M30 28.500h-3.700v4z" fill="#c9a48f"/><path d="M18.800 20.500h8.700M18.800 22.800h8.700M18.800 25.100h8.700M18.800 27.400h5" stroke="#c9a48f" stroke-width=".8"/></svg>
<div class="fl" style="left:290px;top:96px;color:#222628">Documents</div>
<svg class="abs" style="left:417px;top:50px" width="46" height="42" viewBox="0 0 46 42"><use href="#foldB"/><path d="M21.700 16.500h4.800v6h2.800l-5.200 7.500l-5.200-7.500h2.800z" fill="none" stroke="#c9a48f" stroke-width="1" stroke-linejoin="round"/><path d="M18.200 33.300h11.800" stroke="#c9a48f" stroke-width="1"/></svg>
<div class="fl" style="left:390px;top:96px;color:#222628">Downloads</div>
<svg class="abs" style="left:517px;top:50px" width="46" height="42" viewBox="0 0 46 42"><use href="#foldB"/><path d="M20 30V18h9v11" fill="none" stroke="#c9a48f" stroke-width="1.200"/><path d="M20 19.500h9" stroke="#c9a48f" stroke-width="2"/><ellipse cx="18.300" cy="30.500" rx="2.300" ry="1.800" fill="#c9a48f"/><ellipse cx="27.300" cy="29.500" rx="2.300" ry="1.800" fill="#c9a48f"/></svg>
<div class="fl" style="left:490px;top:96px;color:#222628">Music</div>
<svg class="abs" style="left:617px;top:50px" width="46" height="42" viewBox="0 0 46 42"><use href="#foldB"/><rect x="16.300" y="18.500" width="14" height="13" fill="none" stroke="#c9a48f" stroke-width="1"/><path d="M16.300 29.500h14v2H16.300z" fill="#c9a48f"/><path d="M18.300 28.600l3.200-4.400l2.100 2.600l1.600-1.300l3.100 3.100z" fill="#c9a48f"/><circle cx="27" cy="21.500" r="1.200" fill="#c9a48f"/></svg>
<div class="fl" style="left:590px;top:96px;color:#222628">Pictures</div>
</div>
<div class="win" id="ab" style="left:242px;top:464px;width:424px;height:337px;background:#edeef0;border-radius:8px 8px 0 0;box-shadow:0 4px 18px rgba(0,0,0,.45),0 0 0 1px rgba(0,0,0,.14)">
<div class="hdr" style="height:41px;background:#3c3b39;border-radius:8px 8px 0 0"></div>
<div class="abs" style="left:83px;top:7px;width:256px;height:28px;background:#45433f;border-radius:4px"></div>
<div class="abs" style="left:91px;top:33px;width:120px;height:2px;background:#f0713a"></div>
<div class="t" id="ab-about" style="left:130px;top:12px;color:#ffffff;font-size:15px;letter-spacing:.45px">About</div>
<div class="t" id="ab-cred" style="left:246px;top:12px;color:#c6c4c0;font-size:15px">Credits</div>
<svg class="abs" style="left:397px;top:16px" width="10" height="10" viewBox="0 0 10 10"><path d="M1 1l8 8M9 1l-8 8" stroke="#e2e0dc" stroke-width="1.300"/></svg>
<svg class="abs" style="left:142px;top:51px" width="140" height="132" viewBox="0 0 1000 943">
<defs><linearGradient id="abg" x1="0" y1="0" x2="1" y2="1"><stop offset="0" stop-color="#b1a997"/><stop offset=".38" stop-color="#b9b2a1"/><stop offset=".42" stop-color="#c0baab"/><stop offset="1" stop-color="#cbc6b9"/></linearGradient>
<filter id="abs" x="-10%" y="-10%" width="120%" height="125%"><feGaussianBlur stdDeviation="9"/></filter></defs>
<path d="M500 80C190 80 78 105 78 330V612C78 842 190 872 500 872S924 842 924 612V330C924 105 810 80 500 80z" fill="#000" fill-opacity=".28" filter="url(#abs)" transform="translate(0 8)"/>
<path d="M500 72C190 72 72 100 72 330V612C72 842 190 870 500 870S930 842 930 612V330C930 100 810 72 500 72z" fill="url(#abg)"/>
<path d="M213 290q0-77 77-77H440l55 57H700q85 0 85 85V650q0 78-78 78H291q-78 0-78-78z" fill="#e4e0d6"/>
<path d="M213 403q0-78 78-78H440l55-55H707q78 0 78 78V650q0 78-78 78H291q-78 0-78-78z" fill="#f9f8f7"/>
</svg>
<div class="t ctr" id="ab-files" style="top:193px;font-weight:bold;font-size:15px;letter-spacing:-.3px">Files</div>
<div class="t ctr" id="ab-ver" style="top:222px;font-size:15px">3.30.4-stable</div>
<div class="t ctr" id="ab-desc" style="top:247px;font-size:15px;letter-spacing:-.19px">Access and organize your files</div>
<div class="t ctr" id="ab-copy" style="top:271px;font-size:12.500px;letter-spacing:-.06px">© 1999–2018 The Files Authors</div>
<div class="t ctr" id="ab-war" style="top:294px;font-size:12.500px">This program comes with absolutely no warranty.</div>
<div class="t ctr" id="ab-lic" style="top:309px;font-size:12.500px;letter-spacing:-.13px">See the <span style="color:#30afe4;text-decoration:underline">GNU General Public License, version 3 or later</span> for details.</div>
</div>

<div class="win" id="w3" style="left:848px;top:402px;width:699px;height:466px;background:#ffffff">
<div class="hdr" style="height:41px;background:#2b2929;border-bottom:1px solid #1f1d1d"></div>
<svg class="abs" style="left:17px;top:12.5px" width="7" height="17" viewBox="0 0 7 17"><path d="M6 1L1 8.500L6 16" fill="none" stroke="#e6e6e6" stroke-width="1.200"/></svg>
<svg class="abs" style="left:52px;top:12.5px" width="7" height="17" viewBox="0 0 7 17"><path d="M1 1L6 8.500L1 16" fill="none" stroke="#8b8989" stroke-width="1.200"/></svg>
<div class="abs" style="left:82px;top:7px;width:102px;height:28px;border-radius:4px;background:#5e5a58"></div>
<svg class="abs" style="left:90px;top:13px;color:#ffffff" width="16" height="16"><use href="#i-home"/></svg>
<div class="t" id="w3-path" style="left:112px;top:12px;font-weight:bold;color:#ffffff;font-size:15px">Home</div>
<svg class="abs" style="left:162px;top:19px" width="10" height="6" viewBox="0 0 10 6"><path d="M0 0h10L5 5.300z" fill="#ffffff"/></svg>
<svg class="abs" style="left:447px;top:12px" width="18" height="18" viewBox="0 0 18 18"><circle cx="8.300" cy="8" r="6" fill="none" stroke="#eeeeee" stroke-width="1.200"/><path d="M12.300 12.600L16 16" stroke="#eeeeee" stroke-width="1.500"/></svg>
<svg class="abs" style="left:485px;top:15px" width="13" height="11" viewBox="0 0 13 11"><g fill="none" stroke="#eeeeee"><rect x=".5" y=".5" width="2" height="2" stroke-width="1"/><rect x=".5" y="4.500" width="2" height="2" stroke-width="1"/><rect x=".5" y="8.500" width="2" height="2" stroke-width="1"/><path d="M4.500 1.500H13M4.500 5.500H13M4.500 9.500H13" stroke-width="1.200"/></g></svg>
<svg class="abs" style="left:521px;top:19px" width="11" height="6" viewBox="0 0 11 6"><path d="M0 0h11L5.500 5.500z" fill="#eeeeee"/></svg>
<svg class="abs" style="left:556px;top:16px" width="11" height="11" viewBox="0 0 11 11"><path d="M0 1.500H11M0 5.500H11M0 9.500H11" stroke="#eeeeee" stroke-width="1.200"/></svg>
<svg class="abs" style="left:549px;top:8px" width="26" height="26" viewBox="0 0 26 26"><rect x=".5" y=".5" width="25" height="25" rx="4" fill="none" stroke="#c4501f" stroke-width="1" stroke-dasharray="2 1.500"/></svg>
<div class="abs" style="left:583px;top:9px;width:1px;height:24px;background:#3d3b3b"></div>
<div class="abs" style="left:601px;top:23px;width:8px;height:1.300px;background:#eeeeee"></div>
<div class="abs" style="left:637px;top:16px;width:9px;height:9px;border:1.300px solid #eeeeee"></div>
<div class="abs" style="left:667px;top:11px;width:20px;height:20px;border-radius:50%;background:#e95420"></div>
<svg class="abs" style="left:673px;top:17px" width="8" height="8" viewBox="0 0 8 8"><path d="M.5.5l7 7M7.500.5l-7 7" stroke="#ffffff" stroke-width="1.300"/></svg>
<div class="abs side" style="left:0;top:41px;width:189px;height:425px;background:#f5f6f7;border-right:1px solid #d9d9d9"></div>
<div class="row" style="top:41px;"><svg style="color:#4a4a4a;left:14px;top:10px;width:16px;height:16px"><use href="#i-recent"/></svg><span class="sl" style="color:#3d3d3d">Recent</span></div>
<div class="row" style="top:77px;"><svg style="color:#4a4a4a;left:14px;top:10px;width:16px;height:16px"><use href="#i-star"/></svg><span class="sl" style="color:#3d3d3d">Starred</span></div>
<div class="row" style="top:113px;background:#e95420;"><svg style="color:#ffffff;left:14px;top:10px;width:16px;height:16px"><use href="#i-home"/></svg><span class="sl" style="color:#ffffff">Home</span></div>
<div class="row" style="top:149px;"><svg style="color:#4a4a4a;left:14px;top:10px;width:16px;height:16px"><use href="#i-desktop"/></svg><span class="sl" style="color:#3d3d3d">Desktop</span></div>
<div class="row" style="top:185px;"><svg style="color:#4a4a4a;left:14px;top:10px;width:16px;height:16px"><use href="#i-docs"/></svg><span class="sl" style="color:#3d3d3d">Documents</span></div>
<div class="row" style="top:221px;"><svg style="color:#4a4a4a;left:14px;top:10px;width:16px;height:16px"><use href="#i-down"/></svg><span class="sl" style="color:#3d3d3d">Downloads</span></div>
<div class="row" style="top:257px;"><svg style="color:#4a4a4a;left:14px;top:10px;width:16px;height:16px"><use href="#i-music"/></svg><span class="sl" style="color:#3d3d3d">Music</span></div>
<div class="row" style="top:293px;"><svg style="color:#4a4a4a;left:14px;top:10px;width:16px;height:16px"><use href="#i-pics"/></svg><span class="sl" style="color:#3d3d3d">Pictures</span></div>
<div class="row" style="top:329px;"><svg style="color:#4a4a4a;left:14px;top:10px;width:16px;height:16px"><use href="#i-video"/></svg><span class="sl" style="color:#3d3d3d">Videos</span></div>
<div class="row" style="top:365px;"><svg style="color:#4a4a4a;left:14px;top:10px;width:16px;height:16px"><use href="#i-trash"/></svg><span class="sl" style="color:#3d3d3d">Trash</span></div>
<div class="abs" style="left:0;top:405px;width:188px;height:1px;background:#d9d9d9"></div>
<div class="row" style="top:410px"><svg style="color:#4a4a4a;left:14px;top:10px;width:16px;height:16px"><use href="#i-plus"/></svg><span class="sl" style="color:#3d3d3d">Other Locations</span></div>
<svg class="abs" style="left:219px;top:52px" width="46" height="40" viewBox="0 0 46 40"><rect x=".3" y="0" width="45.400" height="39.600" rx="4.500" fill="url(#dg1)"/><path d="M.3 7V4.500Q.3 0 4.800 0H41.200q4.500 0 4.500 4.500V7z" fill="#3a3a3a"/><path d="M23 7h22.700v14H23z" fill="#fff" fill-opacity=".06"/><path d="M.3 21H23v18.600H4.800q-4.500 0-4.500-4.500z" fill="#fff" fill-opacity=".06"/></svg>
<div class="fl" style="left:192px;top:96px;color:#2e3436">Desktop</div>
<svg class="abs" style="left:320px;top:50px" width="46" height="42" viewBox="0 0 46 42"><use href="#foldA"/><path d="M16.300 17.500h13.700v11l-3.700 4h-10z" fill="none" stroke="#fee9dd" stroke-width="1"/><path d="M30 28.500h-3.700v4z" fill="#fee9dd"/><path d="M18.800 20.500h8.700M18.800 22.800h8.700M18.800 25.100h8.700M18.800 27.400h5" stroke="#fee9dd" stroke-width=".8"/></svg>
<div class="fl" style="left:293px;top:96px;color:#2e3436">Documents</div>
<svg class="abs" style="left:421px;top:50px" width="46" height="42" viewBox="0 0 46 42"><use href="#foldA"/><path d="M21.700 16.500h4.800v6h2.800l-5.200 7.500l-5.200-7.500h2.800z" fill="none" stroke="#fee9dd" stroke-width="1" stroke-linejoin="round"/><path d="M18.200 33.300h11.800" stroke="#fee9dd" stroke-width="1"/></svg>
<div class="fl" style="left:394px;top:96px;color:#2e3436">Downloads</div>
<svg class="abs" style="left:521px;top:50px" width="46" height="42" viewBox="0 0 46 42"><use href="#foldA"/><path d="M20 30V18h9v11" fill="none" stroke="#fee9dd" stroke-width="1.200"/><path d="M20 19.500h9" stroke="#fee9dd" stroke-width="2"/><ellipse cx="18.300" cy="30.500" rx="2.300" ry="1.800" fill="#fee9dd"/><ellipse cx="27.300" cy="29.500" rx="2.300" ry="1.800" fill="#fee9dd"/></svg>
<div class="fl" style="left:494px;top:96px;color:#2e3436">Music</div>
<svg class="abs" style="left:622px;top:50px" width="46" height="42" viewBox="0 0 46 42"><use href="#foldA"/><rect x="16.300" y="18.500" width="14" height="13" fill="none" stroke="#fee9dd" stroke-width="1"/><path d="M16.300 29.500h14v2H16.300z" fill="#fee9dd"/><path d="M18.300 28.600l3.200-4.400l2.100 2.600l1.600-1.300l3.100 3.100z" fill="#fee9dd"/><circle cx="27" cy="21.500" r="1.200" fill="#fee9dd"/></svg>
<div class="fl" style="left:595px;top:96px;color:#2e3436">Pictures</div>
<svg class="abs" style="left:219px;top:124px" width="46" height="42" viewBox="0 0 46 42"><use href="#foldA"/><circle cx="26.700" cy="19.700" r="2.100" fill="none" stroke="#fee9dd" stroke-width=".9"/><circle cx="17.500" cy="24.400" r="2.100" fill="none" stroke="#fee9dd" stroke-width=".9"/><circle cx="26.700" cy="29.100" r="2.100" fill="none" stroke="#fee9dd" stroke-width=".9"/><path d="M19.400 23.400l5.400-2.800M19.400 25.400l5.400 2.800" stroke="#fee9dd" stroke-width=".9"/></svg>
<div class="fl" style="left:192px;top:170px;color:#2e3436">Public</div>
<svg class="abs" style="left:320px;top:124px" width="46" height="42" viewBox="0 0 46 42"><use href="#foldA"/><rect x="18.300" y="17.300" width="4.400" height="14" fill="none" stroke="#fee9dd" stroke-width=".9"/><path d="M24.500 17h4v11.500l-2 3.200l-2-3.200z" fill="#fee9dd" fill-opacity=".9"/><path d="M20.500 19.500h2.200M20.500 21.500h2.200M20.500 23.500h2.200M20.500 25.500h2.200M20.500 27.500h2.200M20.500 29.500h2.200" stroke="#fee9dd" stroke-width=".6"/><circle cx="26.500" cy="19.500" r=".9" fill="#f98a4c"/></svg>
<div class="fl" style="left:293px;top:170px;color:#2e3436">Templates</div>
<svg class="abs" style="left:421px;top:124px" width="46" height="42" viewBox="0 0 46 42"><use href="#foldA"/><path d="M15.500 18.400v12.600M31 18.400v12.600M18.200 18.400v12.600M28.300 18.400v12.600M18.200 19.300h10.100M18.200 24.700h10.100M18.200 30.100h10.100" fill="none" stroke="#fee9dd" stroke-width="1"/><path d="M15.500 20.500h2.700M15.500 23h2.700M15.500 25.500h2.700M15.500 28h2.700M28.300 20.500H31M28.300 23H31M28.300 25.500H31M28.300 28H31" stroke="#fee9dd" stroke-width=".8"/></svg>
<div class="fl" style="left:394px;top:170px;color:#2e3436">Videos</div>
</div>
</body>
</html>
